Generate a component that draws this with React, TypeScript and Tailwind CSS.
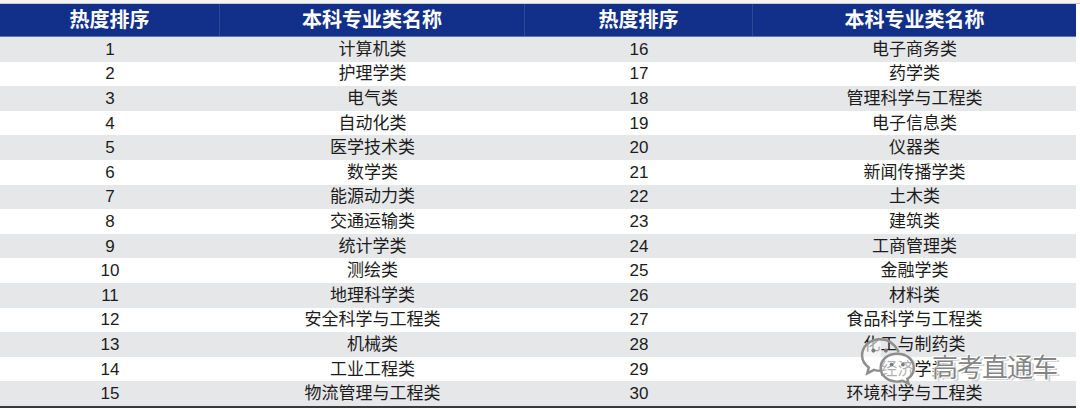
import React from "react";

const rows: [string, string, string, string][] = [
  ["1", "计算机类", "16", "电子商务类"],
  ["2", "护理学类", "17", "药学类"],
  ["3", "电气类", "18", "管理科学与工程类"],
  ["4", "自动化类", "19", "电子信息类"],
  ["5", "医学技术类", "20", "仪器类"],
  ["6", "数学类", "21", "新闻传播学类"],
  ["7", "能源动力类", "22", "土木类"],
  ["8", "交通运输类", "23", "建筑类"],
  ["9", "统计学类", "24", "工商管理类"],
  ["10", "测绘类", "25", "金融学类"],
  ["11", "地理科学类", "26", "材料类"],
  ["12", "安全科学与工程类", "27", "食品科学与工程类"],
  ["13", "机械类", "28", "化工与制药类"],
  ["14", "工业工程类", "29", "经济学类"],
  ["15", "物流管理与工程类", "30", "环境科学与工程类"],
];

const font = { fontFamily: '"Liberation Sans", "Noto Sans CJK SC", sans-serif' };

export default function App() {
  return (
    <div className="relative w-[1080px] h-[410px] bg-white overflow-hidden" style={font}>
      <div className="h-[4px] bg-[#f4f4f5] border-b border-[#c9cbd0]" />
      <div className="w-[1076px]">
        <div className="grid grid-cols-[220px_305px_228px_323px] h-[33px] bg-[#12308a] border-b border-[#5a74b8] text-white font-bold text-[20px]">
          <div className="flex items-center justify-center border-r border-[#2c4896]">热度排序</div>
          <div className="flex items-center justify-center border-r border-[#2c4896]">本科专业类名称</div>
          <div className="flex items-center justify-center border-r border-[#2c4896]">热度排序</div>
          <div className="flex items-center justify-center">本科专业类名称</div>
        </div>
        {rows.map((r, i) => (
          <div
            key={i}
            className={`grid grid-cols-[220px_305px_228px_323px] h-[24.6px] text-[17px] text-[#1c1c1c] leading-none ${
              i % 2 === 0 ? "bg-[#e6e7e9]" : "bg-white"
            }`}
          >
            <div className="flex items-center justify-center">{r[0]}</div>
            <div className="flex items-center justify-center">{r[1]}</div>
            <div className="flex items-center justify-center">{r[2]}</div>
            <div className="flex items-center justify-center">{r[3]}</div>
          </div>
        ))}
        <div className="h-[2px] bg-[#3a3a3a]" />
      </div>

      {/* watermark */}
      <div className="absolute left-[860px] top-[336px] flex items-center gap-[12px] pointer-events-none">
        <svg width="60" height="54" viewBox="0 0 58 52" fill="none">
          <path
            d="M20 3C9.5 3 2 10 2 18.5c0 4.8 2.5 9 6.5 11.8L7 36l6.5-3.4c2.1.6 4.2.9 6.5.9"
            stroke="#8e8e8e"
            strokeWidth="2.4"
            fill="rgba(255,255,255,0.6)"
            strokeLinecap="round"
          />
          <path d="M37 14.5C33.5 8 27.5 3 20 3" stroke="#8e8e8e" strokeWidth="2.4" strokeLinecap="round" />
          <circle cx="13" cy="14" r="2" fill="#7a7a7a" />
          <circle cx="25" cy="14" r="2" fill="#7a7a7a" />
          <path
            d="M36 17c-9.4 0-16 6-16 13.5S26.6 44 36 44c1.9 0 3.7-.3 5.4-.8L47 46l-1.3-4.8C50 38.8 52 35 52 30.5 52 23 45.4 17 36 17z"
            stroke="#8e8e8e"
            strokeWidth="2.4"
            fill="rgba(255,255,255,0.65)"
          />
          <circle cx="30.5" cy="27.5" r="1.8" fill="#7a7a7a" />
          <circle cx="41.5" cy="27.5" r="1.8" fill="#7a7a7a" />
        </svg>
        <div
          className="text-[26px] text-[#858585] tracking-[-1px] leading-none mt-[6px]"
          style={{
            fontFamily: '"Noto Sans CJK SC", sans-serif',
            textShadow: "1px 1px 0 #ffffff, -1px -1px 0 #ffffff, 3px 2px 0 rgba(130,130,130,0.35)",
          }}
        >
          高考直通车
        </div>
      </div>
    </div>
  );
}
